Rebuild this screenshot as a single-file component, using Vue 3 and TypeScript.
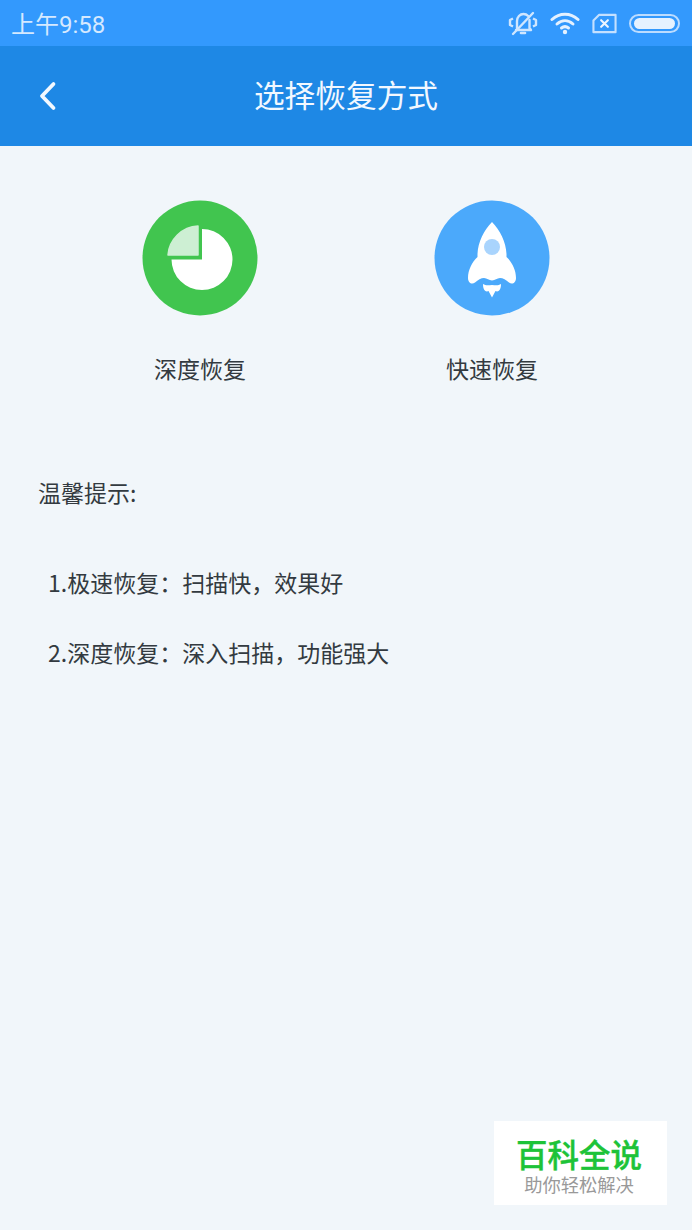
<script setup lang="ts">
interface RecoverOption {
  label: string
  kind: 'deep' | 'fast'
}

const options: RecoverOption[] = [
  { label: '深度恢复', kind: 'deep' },
  { label: '快速恢复', kind: 'fast' },
]

const tips = ['1.极速恢复：扫描快，效果好', '2.深度恢复：深入扫描，功能强大']
</script>

<template>
  <div class="page">
    <div class="status-bar">
      <span class="time">上午9:58</span>
      <div class="status-icons">
        <svg class="ic-bell" width="30" height="26" viewBox="0 0 30 26" fill="none" stroke="#cfe6ff" stroke-width="2.4">
          <path d="M9 18V11c0-4 3-7 6.500-7 2 0 3.500.8 4.700 2M21.500 10v8l1.500 2H8" stroke-linecap="round" stroke-linejoin="round" />
          <path d="M5 8.500 2 10v5l3 1.500M25 8.500l3 1.500v5l-3 1.500" stroke-linejoin="round" />
          <path d="M13 23h4" stroke-width="2.600" stroke-linecap="round" />
          <path d="M5 24 25 3" stroke-linecap="round" />
        </svg>
        <svg class="ic-wifi" width="30" height="24" viewBox="0 0 30 24" fill="none" stroke="#e4f1ff" stroke-width="3" stroke-linecap="round">
          <path d="M2 8.500C9.500 1.500 20.500 1.500 28 8.500" />
          <path d="M7 13c5-4.500 11-4.500 16 0" />
          <path d="M11.500 17c2-1.600 5-1.600 7 0" />
          <circle cx="15" cy="21" r="2.200" fill="#e4f1ff" stroke="none" />
        </svg>
        <svg class="ic-sim" width="25" height="21" viewBox="0 0 26 21" fill="none" stroke="#c4e0ff" stroke-width="2.200">
          <path d="M7.500 1.500H24.500V19.500H1.500V7.500Z" stroke-linejoin="round" />
          <path d="M9.500 7 16.500 14M16.500 7 9.500 14" stroke="#eef6ff" stroke-linecap="round" />
        </svg>
        <div class="battery"><div class="battery-fill"></div></div>
      </div>
    </div>

    <header class="nav-bar">
      <svg class="back" width="20" height="30" viewBox="0 0 20 30" fill="none" stroke="#f2f8ff" stroke-width="3.800" stroke-linecap="round" stroke-linejoin="round">
        <path d="M15.500 3 4 15l11.500 12" />
      </svg>
      <h1 class="title">选择恢复方式</h1>
    </header>

    <main class="content">
      <div class="options">
        <div v-for="opt in options" :key="opt.kind" class="option">
          <svg v-if="opt.kind === 'deep'" width="116" height="116" viewBox="0 0 116 116">
            <circle cx="58" cy="58" r="57.500" fill="#41c54f" />
            <path d="M60 29A30.500 30.500 0 1 1 29.500 59.500H60Z" fill="#ffffff" />
            <path d="M56 26V55H26C27 40 40 26.500 56 26Z" fill="#cdefd3" stroke="#cdefd3" stroke-width="1.500" stroke-linejoin="round" />
          </svg>
          <svg v-else width="116" height="116" viewBox="0 0 116 116">
            <circle cx="58" cy="58" r="57.500" fill="#4ba9fb" />
            <path d="M58 22C50 30 44 42 43.500 54V57C38 62 34 70 34 78C34 83 38 85 41 82.500C44 80 47 78 50 78C53 78 55 80.500 58 80.500C61 80.500 63 78 66 78C69 78 72 80 75 82.500C78 85 82 83 82 78C82 70 78 62 72.500 57V54C72 42 66 30 58 22Z" fill="#ffffff" />
            <path d="M49 84C52 86 55 85 58 85C61 85 64 86 67 84C67 88 66 91 63 91.500L61.500 91L58 97.500L54.500 91L53 91.500C50 91 49 88 49 84Z" fill="#ffffff" />
            <circle cx="58" cy="47" r="8" fill="#a9d4fd" />
          </svg>
          <span class="option-label">{{ opt.label }}</span>
        </div>
      </div>

      <section class="tips">
        <p class="tips-title">温馨提示:</p>
        <p v-for="tip in tips" :key="tip" class="tip">{{ tip }}</p>
      </section>
    </main>

    <div class="watermark">
      <span class="wm-title">百科全说</span>
      <span class="wm-sub">助你轻松解决</span>
    </div>
  </div>
</template>

<style scoped>
.page {
  position: relative;
  width: 692px;
  height: 1230px;
  overflow: hidden;
  background: #f1f6fa;
  font-family: "Noto Sans CJK SC", "Liberation Sans", sans-serif;
  color: #333a40;
}

.status-bar {
  height: 46px;
  background: #3399fd;
  display: flex;
  align-items: center;
  justify-content: space-between;
  padding: 0 12px;
}

.time {
  font-family: Roboto, "Noto Sans CJK SC", sans-serif;
  font-size: 24px;
  line-height: 28px;
  margin-top: 4px;
  margin-left: -1px;
  color: #d5e9ff;
}

.status-icons {
  display: flex;
  align-items: center;
  gap: 12px;
}

.battery {
  width: 51px;
  height: 19px;
  border: 2px solid #bcdcff;
  border-radius: 10px;
  padding: 2px 3px;
  box-sizing: border-box;
}

.battery-fill {
  height: 100%;
  background: #e6f2ff;
  border-radius: 6px;
}

.nav-bar {
  position: relative;
  height: 100px;
  background: #1e88e5;
  display: flex;
  align-items: center;
  justify-content: center;
}

.back {
  position: absolute;
  left: 38px;
  top: 35px;
}

.title {
  margin: -6px 0 0;
  font-size: 30.700px;
  font-weight: 400;
  color: #f2f8ff;
}

.content {
  padding-top: 54px;
}

.options {
  display: grid;
  grid-template-columns: 292px 292px;
  padding: 0 54px;
}

.option {
  display: flex;
  flex-direction: column;
  align-items: center;
}

.option-label {
  margin-top: 35px;
  font-size: 23px;
  line-height: 34px;
}

.tips {
  padding: 90px 0 0 38px;
}

.tips-title {
  margin: 0 0 56px;
  font-size: 23px;
  line-height: 34px;
}

.tip {
  margin: 0 0 36px 10px;
  font-size: 23px;
  line-height: 34px;
}

.watermark {
  position: absolute;
  left: 494px;
  top: 1121px;
  width: 173px;
  height: 84px;
  background: #ffffff;
  display: flex;
  flex-direction: column;
  align-items: center;
  padding: 14px 3px 0 0;
  box-sizing: border-box;
}

.wm-title {
  font-size: 31.500px;
  line-height: 36px;
  font-weight: 500;
  color: #1dc338;
  -webkit-text-stroke: 0.4px #1dc338;
}

.wm-sub {
  margin-top: 2px;
  font-size: 18.300px;
  line-height: 22px;
  color: #999999;
}
</style>
